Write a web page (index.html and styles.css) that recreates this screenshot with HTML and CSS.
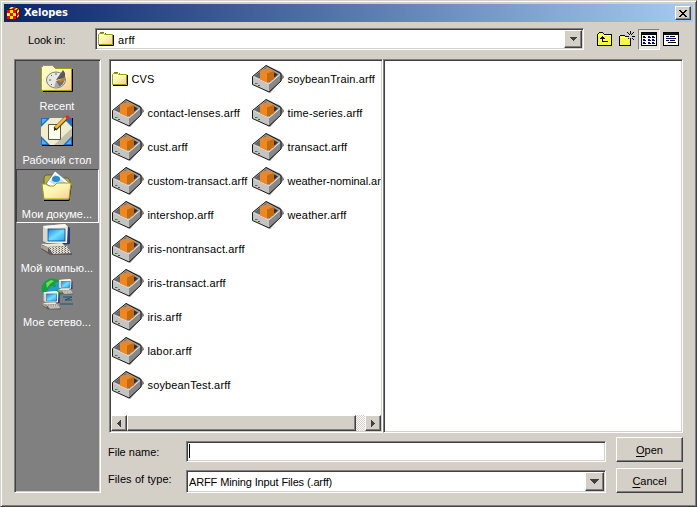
FILE: index.html
```html
<!DOCTYPE html>
<html lang="en">
<head>
  <meta charset="UTF-8" />
  <meta name="viewport" content="width=device-width, initial-scale=1.0"/>
  <title>Xelopes</title>
  <link rel="stylesheet" href="styles.css">
</head>
<body>
  <!-- shared icons -->
  <svg class="defs" width="0" height="0">
    <defs>
      <linearGradient id="paper" x1="0" y1="0" x2="1" y2="1">
        <stop offset="0" stop-color="#ffffc8"/>
        <stop offset="0.5" stop-color="#fdf3b0"/>
        <stop offset="1" stop-color="#f8c89c"/>
      </linearGradient>
      <linearGradient id="screen" x1="0" y1="0" x2="1" y2="1">
        <stop offset="0" stop-color="#2080e8"/>
        <stop offset="0.5" stop-color="#70e0ff"/>
        <stop offset="1" stop-color="#2898f0"/>
      </linearGradient>
      <pattern id="keys" width="3" height="2" patternUnits="userSpaceOnUse">
        <rect width="3" height="2" fill="#e0dcd0"/>
        <rect width="1" height="1" fill="#686058"/>
        <rect x="2" y="1" width="1" height="1" fill="#989090"/>
      </pattern>
    </defs>
    <symbol id="folder" viewBox="0 0 16 14">
      <path d="M1 13.500h14.500V3" fill="none" stroke="#000"/>
      <path d="M.5 12.500V2.500l1-1h4l1 1h8v10z" fill="url(#paper)" stroke="#a0a000"/>
      <path d="M1.500 11V3.500h11" fill="none" stroke="#fff"/>
      <path d="M2 .5h4M7 1.500h1" stroke="#808000"/>
    </symbol>
    <symbol id="arff" viewBox="0 0 32 28">
      <path d="M6 21L18 28L32.500 12L28 6.500L14 0z" fill="#808080"/>
      <path d="M14 .5L28.500 8.500V16L17 27L.5 19V11.500z" fill="#a0a0a0"/>
      <path d="M14 2.500L26 9.500L17 17L3 11z" fill="#303030"/>
      <path d="M13 4V10L7 13L3 11z" fill="#686868"/>
      <path d="M.5 11.500L17 19.500V27L.5 19z" fill="#c4c4c4"/>
      <path d="M17 19.500L29 9V16L17 27z" fill="#888"/>
      <path d="M1 11.500L17 19L28 9.500" fill="none" stroke="#e4e4e4"/>
      <path d="M.5 11.500L14 .5L29 8.500V16L17 27L.5 19.500z" fill="none" stroke="#181818"/>
      <path d="M8 6L15 3L22 6V14L15 17.500L8 14.500z" fill="#f08820"/>
      <path d="M8 6L15 3L22 6L15 8.500z" fill="#e08838"/>
      <path d="M15 8.500L22 6V14L15 17.500z" fill="#c46a10"/>
      <path d="M3 18.500h2.500" stroke="#00a040"/>
      <path d="M6 20.500h2" stroke="#e01010"/>
    </symbol>
    <symbol id="monitor" viewBox="0 0 32 32">
      <path d="M4 3L25 1L29 4V20L9 22L3 18z" fill="#303870"/>
      <path d="M2 2L24 0L27 3L26 19L5 19L2 17z" fill="#d8d8c8"/>
      <path d="M2 2L24 0L27 3L5 5z" fill="#f8f8e8"/>
      <path d="M6 4h20v15H6z" fill="#f0f0e0"/>
      <rect x="7" y="5" width="17" height="12" fill="url(#screen)" stroke="#104080" stroke-width=".8"/>
      <path d="M0 21L22 20L31 29V31H9L0 25z" fill="#605860"/>
      <path d="M0 20L21 19L24 22L6 23z" fill="#e8e8d8"/>
      <path d="M0 21L7 23V28L0 24z" fill="#a8a090"/>
      <path d="M7 23L26 22L30 29L12 30z" fill="url(#keys)"/>
    </symbol>
  </svg>

  <div class="window">
    <div class="title">
      <svg class="logo" width="13" height="13" viewBox="0 0 13 13">
        <path d="M0 3L4 0H11L13 2V9L9 13H1L0 12z" fill="#600000"/>
        <path d="M0 3h9v9H0z" fill="#f00"/>
        <path d="M3 3h3v3H3zM0 6h3v3H0zM6 6h3v3H6zM3 9h3v3H3zM4 0h3L5 2H2zM9 1h2L9 3H7zM10 4l2-2v3l-2 2zM10 9l2-2v2l-2 2z" fill="#ff0"/>
        <path d="M7 0h2L7 2H5zM10 7l2-2v2l-2 2z" fill="#f00"/>
      </svg>
      <span class="title-text">Xelopes</span>
      <button class="close">
        <svg width="8" height="7" viewBox="0 0 8 7"><path d="M0 0h2v1h1v1h2V1h1V0h2v1H7v1H6v1H5v1h1v1h1v1h1v1H6V6H5V5H3v1H2v1H0V6h1V5h1V4h1V3H2V2H1V1H0z"/></svg>
      </button>
    </div>

    <div class="lookin">
      <label>Look in:</label>
      <div class="field combo">
        <svg width="16" height="14"><use href="#folder"/></svg>
        <span class="dir">arff</span>
        <button class="arrow"><svg width="7" height="4" viewBox="0 0 7 4"><path d="M0 0h7v1H6v1H5v1H4v1H3V3H2V2H1V1H0z"/></svg></button>
      </div>
      <div class="tools">
        <svg class="up" width="15" height="14" viewBox="0 0 15 14">
          <path d="M0 2h1V1h1V0h4v1h1v1h8v12H0z"/>
          <path d="M1 2h1V1h4v1h1v1h7v10H1z" fill="#f8f840"/>
          <path d="M1 3h13v1H1z" fill="#ffffb0"/>
          <path d="M5 4h1v1h1v1h1v1H6v2h5v1H5V7H3V6h1V5h1z"/>
        </svg>
        <svg class="new" width="16" height="15" viewBox="0 0 16 15">
          <path d="M0 5h1V4h5v1h6v10H0z"/>
          <path d="M1 5h5v1h5v8H1z" fill="#f8f840"/>
          <path d="M1 6h10v1H1z" fill="#ffffb0"/>
          <path d="M9 3h6v5H9z" fill="#d4d0c8"/>
          <path d="M11 0h1v3h-1zM11 7h1v3h-1zM8 5h2v1H8zM13 5h3v1h-3zM8 1h1v1H8zM9 2h1v1H9zM10 3h1v1h-1zM14 1h1v1h-1zM13 2h1v1h-1zM12 3h1v1h-1zM13 7h1v1h-1zM14 8h1v1h-1zM9 7h1v1H9z"/>
        </svg>
        <div class="tool pressed">
          <svg width="16" height="14" viewBox="0 0 16 14">
            <path d="M0 0h16v14H0z"/>
            <path d="M1 3h14v10H1z" fill="#fff"/>
            <path d="M1 1h14v1H1z" fill="#000080"/>
            <path d="M2 4h2v2H2zM2 7h2v2H2zM2 10h2v2H2zM7 4h2v2H7zM7 7h2v2H7zM7 10h2v2H7zM11 4h2v2h-2zM11 7h2v2h-2zM11 10h2v2h-2z" fill="#000080"/>
            <path d="M4 5h1v1H4zM4 8h1v1H4zM4 11h1v1H4zM9 5h1v1H9zM9 8h1v1H9zM9 11h1v1H9zM13 5h1v1h-1zM13 8h1v1h-1zM13 11h1v1h-1z"/>
          </svg>
        </div>
        <svg class="details" width="16" height="14" viewBox="0 0 16 14">
          <path d="M0 0h16v14H0z"/>
          <path d="M1 3h14v10H1z" fill="#fff"/>
          <path d="M1 1h14v1H1z" fill="#000080"/>
          <path d="M7 4h5v1H7zM7 8h5v1H7zM5 10h8v1H5z"/>
          <path d="M3 4h3v1H3zM3 6h10v1H3zM3 8h3v1H3z" fill="#000080"/>
        </svg>
      </div>
    </div>

    <div class="main">
      <div class="places">
        <div class="place">
          <svg width="32" height="32" viewBox="0 0 32 32">
            <path d="M2 29.500H31.500V7" fill="none" stroke="#000"/>
            <path d="M.5 28.500V5.500l2-2h9l3 3h16v22z" fill="url(#paper)" stroke="#a0a000"/>
            <path d="M1.500 27V6h3" fill="none" stroke="#fff"/>
            <ellipse cx="15" cy="18" rx="9.500" ry="8" fill="#e8e8e0" stroke="#808078"/>
            <path d="M15 19L24 17L22 22L17 26z" fill="#707070"/>
            <path d="M15 18L22 8L24 11V16z" fill="#585860"/>
            <path d="M16 19l8-4v3l-4 2z" fill="#c88018"/>
            <path d="M15 19L13 26L19 25z" fill="#a8a8a8"/>
            <path d="M15 11v2M8 18h2M10 13l1 1M10 23l1-1" stroke="#606060"/>
          </svg>
          <span>Recent</span>
        </div>
        <div class="place">
          <svg width="32" height="32" viewBox="0 0 32 32">
            <path d="M1 2h31v28H1z" fill="#000"/>
            <path d="M0 2h31v27H0z" fill="#f0eccc"/>
            <path d="M31 12V29H13z" fill="#c0c0ac"/>
            <path d="M0 2h9L0 11zM31 2h-9l9 9zM0 29v-9l9 9zM31 29v-9l-9 9z" fill="#1870c8"/>
            <path d="M1 3h5L1 8zM1 28v-5l5 5zM30 28v-5l-5 5z" fill="#58b0f0"/>
            <path d="M7.500 8.500h12v15h-12z" fill="#fffff0" stroke="#585848"/>
            <path d="M14 13L25 2" stroke="#504000" stroke-width="4"/>
            <path d="M14 12.500L25 1.500" stroke="#f8b838" stroke-width="2.500"/>
            <path d="M24 1l2-2 3 2-2 3z" fill="#e02838"/>
            <path d="M13 11l3 2-3 2z" fill="#302000"/>
          </svg>
          <span>Рабочий стол</span>
        </div>
        <div class="place selected">
          <svg width="32" height="32" viewBox="0 0 32 32">
            <path d="M3 18V7l2-2h7l3 3h12l2 3v10z" fill="#b8b050" stroke="#686800"/>
            <path d="M5 14L14 1L31 15L25 25z" fill="#fff" stroke="#5868a8" stroke-width=".7"/>
            <path d="M9 12L14 4L26 14L22 20z" fill="#b8e0ff"/>
            <ellipse cx="15" cy="9" rx="4" ry="3" fill="#2888c8"/>
            <path d="M3 30.500h25l2-15" fill="none" stroke="#000"/>
            <path d="M1 14h4l3 2h5l3-3h14l-2 16H3z" fill="url(#paper)" stroke="#a0a000"/>
          </svg>
          <span>Мои докуме...</span>
        </div>
        <div class="place">
          <svg width="32" height="32"><use href="#monitor"/></svg>
          <span>Мой компью...</span>
        </div>
        <div class="place">
          <svg width="32" height="32" viewBox="0 0 32 32">
            <circle cx="11" cy="11" r="10.500" fill="#2898d8"/>
            <path d="M2 6Q7-1 15 1L19 3L14 5L15 9L10 8L6 13L2 15Q-1 10 2 6zM15 12l6-3v7l-5 4-3-4z" fill="#18a038"/>
            <path d="M5 5l5-3 3 1-4 3-3 4z" fill="#70d860"/>
            <path d="M22 19h9l-7 3h7M19 26h13" fill="none" stroke="#105878"/>
            <svg x="17" y="1" width="16" height="16"><use href="#monitor"/></svg>
            <svg x="1" y="13" width="20" height="19"><use href="#monitor"/></svg>
          </svg>
          <span>Мое сетево...</span>
        </div>
      </div>

      <div class="right">
        <div class="panes">
          <div class="pane list">
            <div class="files">
              <div class="file"><svg width="16" height="14"><use href="#folder"/></svg><span>CVS</span></div>
              <div class="file"><svg width="32" height="28"><use href="#arff"/></svg><span>contact-lenses.arff</span></div>
              <div class="file"><svg width="32" height="28"><use href="#arff"/></svg><span>cust.arff</span></div>
              <div class="file"><svg width="32" height="28"><use href="#arff"/></svg><span>custom-transact.arff</span></div>
              <div class="file"><svg width="32" height="28"><use href="#arff"/></svg><span>intershop.arff</span></div>
              <div class="file"><svg width="32" height="28"><use href="#arff"/></svg><span>iris-nontransact.arff</span></div>
              <div class="file"><svg width="32" height="28"><use href="#arff"/></svg><span>iris-transact.arff</span></div>
              <div class="file"><svg width="32" height="28"><use href="#arff"/></svg><span>iris.arff</span></div>
              <div class="file"><svg width="32" height="28"><use href="#arff"/></svg><span>labor.arff</span></div>
              <div class="file"><svg width="32" height="28"><use href="#arff"/></svg><span>soybeanTest.arff</span></div>
              <div class="file"><svg width="32" height="28"><use href="#arff"/></svg><span>soybeanTrain.arff</span></div>
              <div class="file"><svg width="32" height="28"><use href="#arff"/></svg><span>time-series.arff</span></div>
              <div class="file"><svg width="32" height="28"><use href="#arff"/></svg><span>transact.arff</span></div>
              <div class="file long"><svg width="32" height="28"><use href="#arff"/></svg><span>weather-nominal.ar</span></div>
              <div class="file"><svg width="32" height="28"><use href="#arff"/></svg><span>weather.arff</span></div>
            </div>
            <div class="scrollbar">
              <button><svg width="4" height="7" viewBox="0 0 4 7"><path d="M4 0v7H3V6H2V5H1V4H0V3h1V2h1V1h1V0z"/></svg></button>
              <div class="thumb"></div>
              <div class="track"></div>
              <button><svg width="4" height="7" viewBox="0 0 4 7"><path d="M0 0v7h1V6h1V5h1V4h1V3H3V2H2V1H1V0z"/></svg></button>
            </div>
          </div>
          <div class="pane preview"></div>
        </div>

        <div class="form">
          <label>File name:</label>
          <div class="field name"><span class="caret"></span></div>
          <button class="btn"><span><u>O</u>pen</span></button>
          <label class="type-label">Files of type:</label>
          <div class="field type">
            <span class="type-text">ARFF Mining Input Files (.arff)</span>
            <button class="arrow"><svg width="9" height="5" viewBox="0 0 9 5"><path d="M0 0h9v1H8v1H7v1H6v1H5v1H4V4H3V3H2V2H1V1H0z"/></svg></button>
          </div>
          <button class="btn"><span><u>C</u>ancel</span></button>
        </div>
      </div>
    </div>
  </div>
</body>
</html>
```
FILE: styles.css
```css
* {
  box-sizing: border-box;
}
body {
  margin: 0;
  font-family: "Liberation Sans", Arial, sans-serif;
  font-size: 11px;
  line-height: 14px;
  color: #000;
}
svg {
  display: block;
  flex: none;
  overflow: visible;
}
.defs {
  position: absolute;
}
button {
  font: inherit;
  color: #000;
  padding: 0;
  display: flex;
  align-items: center;
  justify-content: center;
  background: #d4d0c8;
  border: 1px solid;
  border-color: #fff #404040 #404040 #fff;
  box-shadow: inset -1px -1px #808080;
}
.window {
  width: 697px;
  height: 507px;
  padding: 2px;
  background: #d4d0c8;
  border: 1px solid;
  border-color: #d4d0c8 #404040 #404040 #d4d0c8;
  box-shadow: inset 1px 1px #fff, inset -1px -1px #808080;
}

/* title bar */
.title {
  height: 18px;
  margin: 1px;
  padding: 0 2px 0 3px;
  display: flex;
  align-items: center;
  background: linear-gradient(to right, #0a246a, #a6caf0);
}
.title-text {
  margin-left: 4px;
  flex: 1;
  color: #fff;
  font-family: "DejaVu Sans Condensed", "DejaVu Sans", sans-serif;
  font-stretch: condensed;
  font-weight: bold;
  font-size: 11px;
}
.close {
  width: 16px;
  height: 14px;
}

/* sunken boxes */
.field, .pane, .places {
  background: #fff;
  border: 1px solid;
  border-color: #808080 #fff #fff #808080;
  box-shadow: inset 1px 1px #404040, inset -1px -1px #d4d0c8;
}
.lookin {
  display: flex;
  height: 22px;
  margin: 6px 0 9px;
  padding-left: 25px;
}
.lookin label {
  width: 67px;
  padding-top: 5px;
  letter-spacing: -0.15px;
}
.combo {
  width: 489px;
  padding: 1px;
  display: flex;
  align-items: center;
}
.combo .dir {
  margin-left: 4px;
  flex: 1;
  padding-top: 1px;
  letter-spacing: 0.3px;
}
.arrow {
  width: 18px;
  height: 18px;
}
.arrow svg, .scrollbar svg {
  fill: #404040;
}
.combo > svg {
  margin-left: 1px;
}
.tools {
  display: flex;
  padding-top: 1px;
}
.up {
  margin: 3px 7px 0 13px;
}
.new {
  margin: 2px 3px 0 0;
}
.tool.pressed {
  width: 22px;
  height: 21px;
  padding: 2px;
  background: #eae8e4;
  border: 1px solid;
  border-color: #808080 #fff #fff #808080;
}
.details {
  margin: 3px 0 0 3px;
}

.main {
  display: flex;
  gap: 8px;
  padding-left: 11px;
}
.places {
  width: 87px;
  height: 434px;
  padding: 1px;
  background: #808080;
}
.place {
  width: 83px;
  height: 54px;
  padding: 1px 1px 0 0;
  display: flex;
  flex-direction: column;
  align-items: center;
  color: #fff;
}
.place span {
  margin-top: 5px;
  white-space: nowrap;
}
.selected {
  padding-top: 0;
  border: 1px solid;
  border-color: #404040 #fff #fff #404040;
}
.right {
  width: 574px;
}
.panes {
  display: flex;
  height: 374px;
}
.list {
  width: 274px;
  padding: 1px;
  display: flex;
  flex-direction: column;
}
.preview {
  flex: 1;
}
.files {
  flex: 1;
  margin: 1px 0 0 1px;
  display: grid;
  grid-template-rows: repeat(10, 34px);
  grid-auto-columns: 140px;
  grid-auto-flow: column;
  overflow: hidden;
}
.file {
  display: flex;
  align-items: center;
  gap: 3.5px;
  white-space: nowrap;
}
.file span {
  letter-spacing: 0.15px;
}
.long span {
  letter-spacing: -0.05px;
}
.scrollbar {
  height: 16px;
  display: flex;
}
.scrollbar button {
  width: 16px;
}
.thumb {
  width: 229px;
  background: #d4d0c8;
  border: 1px solid;
  border-color: #fff #404040 #404040 #fff;
  box-shadow: inset -1px -1px #808080;
}
.track {
  flex: 1;
  background: repeating-conic-gradient(#d4d0c8 0 25%, #fff 0 50%) 0 0 / 2px 2px;
}

/* bottom rows */
.form {
  display: grid;
  grid-template-columns: 77px 420px 67px;
  grid-template-rows: 25px 25px;
  row-gap: 6px;
  margin-top: 4px;
}
.form .btn {
  margin-left: 10px;
  width: 67px;
}
.form u {
  text-underline-offset: 2px;
}
.form label {
  padding-top: 8px;
  margin-left: -1px;
}
.form .type-label {
  padding-top: 4px;
  letter-spacing: 0.1px;
}
.name {
  height: 21px;
  margin-top: 4px;
  padding: 2px;
}
.caret {
  display: block;
  width: 1px;
  height: 14px;
  background: #000;
}
.type {
  height: 23px;
  margin-top: 2px;
  padding: 1px;
  display: flex;
  align-items: center;
}
.type .arrow {
  width: 19px;
  height: 19px;
}
.type-text {
  flex: 1;
  padding: 1px 0 0 1px;
  letter-spacing: -0.13px;
}
```
